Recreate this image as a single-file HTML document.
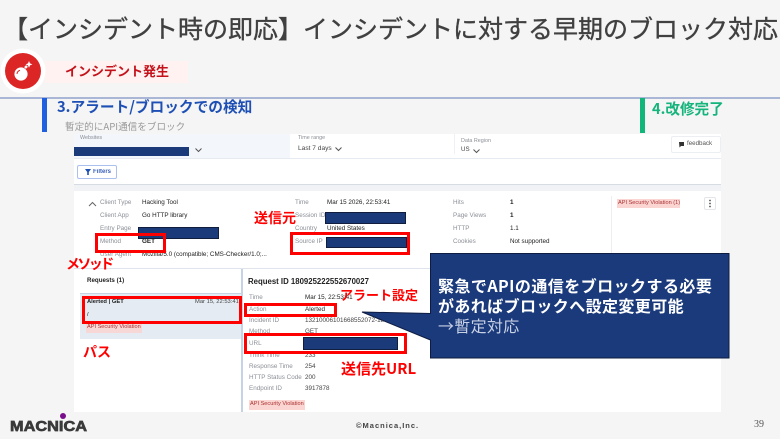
<!DOCTYPE html>
<html lang="ja">
<head>
<meta charset="utf-8">
<style>
html,body{margin:0;padding:0;background:#f5f5f5}
#s{position:relative;width:780px;height:439px;overflow:hidden;background:#f5f5f5;font-family:"Liberation Sans","Noto Sans CJK JP",sans-serif}
#s div,#s svg{position:absolute}
.t{white-space:nowrap;line-height:1}
.j{font-family:"Noto Sans CJK JP",sans-serif}
.x{font-size:6.3px;white-space:nowrap;line-height:1;color:#222;filter:blur(.25px)}
.g{color:#8b8f96}
.b{font-weight:700}
.r{border:3.5px solid #f00;box-sizing:border-box}
.n{background:#1b3a7a;border:1px solid #111d3d;box-sizing:border-box}
.l{color:#f00;font-weight:700;font-size:14px;line-height:1;white-space:nowrap;font-family:"Noto Sans CJK JP",sans-serif}
.tag{background:#fbd5d2;color:#a33;font-size:5.6px;line-height:1;white-space:nowrap;filter:blur(.2px)}
</style>
</head>
<body>
<div id="s">
<div class="t j" style="left:3px;top:16px;font-size:25px;color:#404040;-webkit-text-stroke:.35px #404040;filter:blur(.3px)">【インシデント時の即応】インシデントに対する早期のブロック対応</div>

<div style="left:45px;top:61px;width:143px;height:22px;background:#fff2f1"></div>
<div class="t b j" style="left:65px;top:64px;font-size:13px;color:#c4121a">インシデント発生</div>
<svg style="left:0;top:48px" width="46" height="46" viewBox="0 0 46 46">
<circle cx="23" cy="23" r="22.500" fill="#fff"/>
<circle cx="23" cy="23" r="18" fill="#dc2626"/>
<circle cx="21" cy="26" r="6.600" fill="#fff"/>
<path d="M25 20l2-2" stroke="#fff" stroke-width="2.600"/>
<path d="M29 13l1 2.400 2.400 1-2.400 1-1 2.400-1-2.400-2.400-1 2.400-1z" fill="#fff"/>
<path d="M17 26a4 4 0 0 1 3-3.600" stroke="#dc2626" stroke-width="1" fill="none"/>
</svg>

<div style="left:0;top:97px;width:780px;height:1.500px;background:#a9b6d6"></div>
<div style="left:42px;top:98px;width:5px;height:34px;background:#1f5fe0"></div>
<div class="t b j" style="left:57px;top:100px;font-size:14.700px;color:#1d4fb4">3.アラート/ブロックでの検知</div>
<div class="t j" style="left:65px;top:122px;font-size:9.600px;color:#9a9a9a">暫定的にAPI通信をブロック</div>
<div style="left:640px;top:98px;width:5px;height:35px;background:#10b67a"></div>
<div class="t b j" style="left:652px;top:102px;font-size:14.600px;color:#14b47c">4.改修完了</div>

<!-- dashboard -->
<div style="left:74px;top:134px;width:647px;height:278px;background:#fff"></div>
<div style="left:74px;top:134px;width:216px;height:24px;background:#f3f6fb"></div>
<div style="left:74px;top:184px;width:647px;height:7px;background:#f0f2f6;border-top:1px solid #d6dbe4;box-sizing:border-box"></div>
<div style="left:74px;top:158px;width:647px;height:1px;background:#e6eaf1"></div>
<div style="left:454px;top:134px;width:1px;height:20px;background:#edf0f4"></div>

<div class="x g" style="left:80px;top:136px;font-size:5.400px">Websites</div>
<div style="left:74px;top:147px;width:115px;height:9px;background:#1b3a7a"></div>
<svg style="left:194px;top:147px" width="9" height="6"><path d="M1.500 1.500L4.500 4.500 7.500 1.500" stroke="#555" fill="none"/></svg>
<div class="x g" style="left:298px;top:136px;font-size:5.400px">Time range</div>
<div class="x" style="left:298px;top:146px;font-size:6.600px;color:#444">Last 7 days</div>
<svg style="left:334px;top:146px" width="9" height="6"><path d="M1.500 1.500L4.500 4.500 7.500 1.500" stroke="#555" fill="none"/></svg>
<div class="x g" style="left:461px;top:139px;font-size:5.400px">Data Region</div>
<div class="x" style="left:461px;top:147px;font-size:6.200px;color:#444">US</div>
<svg style="left:472px;top:148px" width="9" height="6"><path d="M1.500 1.500L4.500 4.500 7.500 1.500" stroke="#555" fill="none"/></svg>
<div style="left:671px;top:136px;width:50px;height:17px;background:#fff;border:1px solid #eceef2;box-sizing:border-box;border-radius:2px"></div>
<div class="x" style="left:687px;top:141px;font-size:6.200px;color:#555">feedback</div>
<svg style="left:678px;top:141px" width="7" height="7"><path d="M1 1h5v4H3L1.500 6.500z" fill="#333"/></svg>

<div style="left:77px;top:165px;width:40px;height:14px;border:1px solid #aac1ee;box-sizing:border-box;border-radius:2px;background:#fff"></div>
<svg style="left:85px;top:169px" width="7" height="6"><path d="M0 0h6L3.800 3v3H2.200V3z" fill="#1d4fb4"/></svg>
<div class="x b" style="left:93px;top:169px;font-size:6px;color:#3a62b8">Filters</div>

<svg style="left:88px;top:201px" width="9" height="6"><path d="M1 5L4.500 1.500 8 5" stroke="#666" fill="none"/></svg>
<div class="x g" style="left:100px;top:200px">Client Type</div><div class="x" style="left:142px;top:200px">Hacking Tool</div>
<div class="x g" style="left:100px;top:213px">Client App</div><div class="x" style="left:142px;top:213px">Go HTTP library</div>
<div class="x g" style="left:100px;top:226px">Entry Page</div>
<div class="n" style="left:138px;top:227px;width:81px;height:12px"></div>
<div class="x g" style="left:100px;top:239px">Method</div><div class="x b" style="left:142px;top:239px">GET</div>
<div class="x g" style="left:100px;top:252px">User Agent</div><div class="x" style="left:142px;top:252px">Mozilla/5.0 (compatible; CMS-Checker/1.0;...</div>

<div class="x g" style="left:295px;top:200px">Time</div><div class="x" style="left:327px;top:200px">Mar 15 2026, 22:53:41</div>
<div class="x g" style="left:295px;top:213px">Session ID</div>
<div class="n" style="left:325px;top:212px;width:81px;height:12px"></div>
<div class="x g" style="left:295px;top:226px">Country</div><div class="x" style="left:327px;top:226px">United States</div>
<div class="x g" style="left:295px;top:239px">Source IP</div>
<div class="n" style="left:326px;top:237px;width:81px;height:11px"></div>

<div class="x g" style="left:453px;top:200px">Hits</div><div class="x b" style="left:510px;top:200px">1</div>
<div class="x g" style="left:453px;top:213px">Page Views</div><div class="x b" style="left:510px;top:213px">1</div>
<div class="x g" style="left:453px;top:226px">HTTP</div><div class="x" style="left:510px;top:226px">1.1</div>
<div class="x g" style="left:453px;top:239px">Cookies</div><div class="x" style="left:510px;top:239px">Not supported</div>
<div style="left:611px;top:196px;width:1px;height:60px;background:#eceef2"></div>
<div class="tag" style="left:617px;top:199px;padding:2px 1px;width:63px;box-sizing:border-box;height:9px">API Security Violation (1)</div>
<div style="left:704px;top:197px;width:12px;height:13px;border:1px solid #e3e5ea;box-sizing:border-box;border-radius:2px;background:#fff"></div>
<svg style="left:708px;top:199px" width="4" height="9"><circle cx="2" cy="1.500" r=".9" fill="#555"/><circle cx="2" cy="4.500" r=".9" fill="#555"/><circle cx="2" cy="7.500" r=".9" fill="#555"/></svg>

<div style="left:74px;top:268px;width:647px;height:1px;background:#dfe4ec"></div>
<div style="left:241px;top:269px;width:1.500px;height:143px;background:#c5d3e5"></div>
<div class="x b" style="left:87px;top:278px;font-size:6.200px">Requests (1)</div>
<div style="left:80px;top:293px;width:161px;height:46px;background:#e4ebf3"></div>
<div style="left:80px;top:293px;width:161px;height:1px;background:#c5d3e5"></div>
<div class="x b" style="left:87px;top:300px;font-size:5.800px">Alerted | GET</div>
<div class="x" style="left:195px;top:300px;font-size:5.800px;color:#444">Mar 15, 22:53:41</div>
<div class="x" style="left:87px;top:312px;font-size:6px">/</div>
<div class="tag" style="left:86px;top:323px;padding:2px 1px;background:#f8d8d6">API Security Violation</div>

<div class="t b" style="left:248px;top:278px;font-size:7.800px;color:#222;filter:blur(.2px)">Request ID 180925222552670027</div>
<div class="x g" style="left:249px;top:295px">Time</div><div class="x" style="left:305px;top:295px">Mar 15, 22:53:41</div>
<div class="x g" style="left:249px;top:307px">Action</div><div class="x" style="left:305px;top:307px">Alerted</div>
<div class="x g" style="left:249px;top:318px">Incident ID</div><div class="x" style="left:305px;top:318px;color:#444">13210006101668552072-1809...</div>
<div class="x g" style="left:249px;top:329px">Method</div><div class="x" style="left:305px;top:329px;color:#444">GET</div>
<div class="x g" style="left:249px;top:341px">URL</div>
<div class="n" style="left:303px;top:337px;width:95px;height:13px"></div>
<div class="x g" style="left:249px;top:353px">Think Time</div><div class="x" style="left:305px;top:353px;color:#444">233</div>
<div class="x g" style="left:249px;top:364px">Response Time</div><div class="x" style="left:305px;top:364px;color:#444">254</div>
<div class="x g" style="left:249px;top:375px">HTTP Status Code</div><div class="x" style="left:305px;top:375px;color:#444">200</div>
<div class="x g" style="left:249px;top:386px">Endpoint ID</div><div class="x" style="left:305px;top:386px;color:#444">3917878</div>
<div class="tag" style="left:249px;top:400px;padding:2px 1px">API Security Violation</div>

<!-- red boxes -->
<div class="r" style="left:95px;top:233px;width:71px;height:20px"></div>
<div class="r" style="left:290px;top:232px;width:120px;height:23px"></div>
<div class="r" style="left:82px;top:296px;width:160px;height:28px"></div>
<div class="r" style="left:244px;top:303px;width:93px;height:14px"></div>
<div class="r" style="left:244px;top:333px;width:163px;height:21px"></div>

<!-- callout -->
<svg style="left:355px;top:250px" width="378" height="112" viewBox="355 250 378 112">
<path d="M430.500 253.500H729V358H430.500V340L362 312 430.500 313.500Z" fill="#1a3a7b" stroke="#0e1c42" stroke-width="1"/>
</svg>
<div class="t b j" style="left:438px;top:277px;font-size:16px;color:#fff;letter-spacing:.45px">緊急でAPIの通信をブロックする必要</div>
<div class="t b j" style="left:438px;top:297px;font-size:16px;color:#fff;letter-spacing:.4px">があればブロックへ設定変更可能</div>
<div class="t j" style="left:438px;top:317px;font-size:16px;color:#c8d0e4;letter-spacing:.3px">→暫定対応</div>

<!-- red labels -->
<div class="l" style="left:254px;top:211px">送信元</div>
<div class="l" style="left:66px;top:257px;font-size:14px;letter-spacing:-2.600px">メソッド</div>
<div class="l" style="left:83px;top:345px">パス</div>
<div class="l" style="left:340px;top:288px;font-size:13px">アラート設定</div>
<div class="l" style="left:341px;top:361px;font-size:15px">送信先URL</div>

<!-- footer -->
<svg style="left:8px;top:410px" width="82" height="24" viewBox="0 0 82 24">
<circle cx="55" cy="6" r="3" fill="#7a0f8c"/>
<text x="2" y="21" font-family="Liberation Sans" font-weight="700" font-size="15" fill="#3a3a3a" stroke="#3a3a3a" stroke-width=".7" textLength="77" lengthAdjust="spacingAndGlyphs">MACNICA</text>
</svg>
<div class="t b" style="left:356px;top:422px;font-size:7.500px;color:#444;letter-spacing:1px">©Macnica,Inc.</div>
<div class="t" style="left:754px;top:420px;font-size:10px;color:#555;font-family:'Liberation Serif',serif">39</div>
</div>
</body>
</html>
